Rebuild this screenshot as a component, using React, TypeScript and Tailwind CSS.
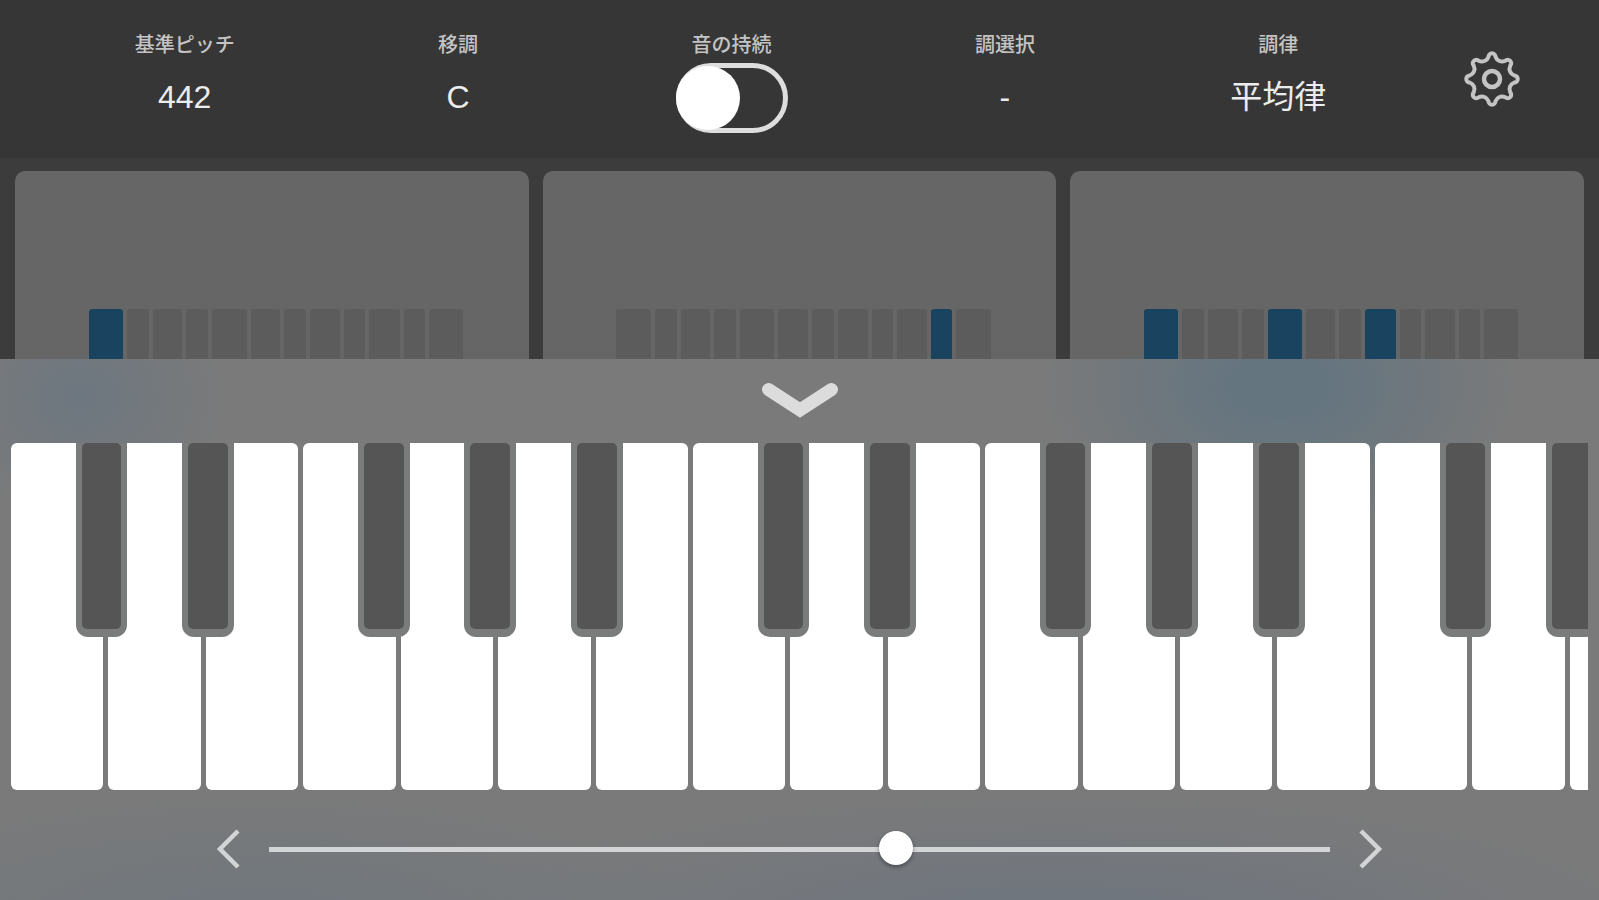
import { useState, type ReactNode } from "react";

const LABELS = {
  pitch: "基準ピッチ",
  transpose: "移調",
  sustain: "音の持続",
  keySelect: "調選択",
  temperament: "調律",
};

/* Relative widths of the twelve semitones in a chord preview. */
const SEMITONES = [34, 22, 29, 22, 34, 29, 22, 30, 21, 30, 21, 34];

const CHORDS = [
  { id: "c1", active: [0] },
  { id: "c2", active: [10] },
  { id: "c3", active: [0, 4, 7] },
];

const WHITE_NOTES = ["C", "D", "E", "F", "G", "A", "B"];
const WHITE_KEYS = Array.from({ length: 17 }, (_, i) => WHITE_NOTES[i % 7]);

/* Where each black key starts, measured on the white key to its left. */
const BLACK_LEFT: Record<string, string> = {
  C: "left-[70%]",
  D: "left-[80%]",
  F: "left-[59%]",
  G: "left-[69%]",
  A: "left-[79%]",
};

function gearPath(cx: number, cy: number, radius: number) {
  const at = (deg: number) => {
    const a = (deg * Math.PI) / 180;
    return `${(cx + radius * Math.sin(a)).toFixed(2)} ${(cy - radius * Math.cos(a)).toFixed(2)}`;
  };
  let d = `M${at(-9)}`;
  for (let t = 0; t < 8; t++) {
    d += `A3.5 3.5 0 0 1 ${at(t * 45 + 9)}A7 7 0 0 0 ${at(t * 45 + 36)}`;
  }
  return d + "Z";
}

function Field({ id, label, children }: { id: string; label: string; children: ReactNode }) {
  return (
    <div className="flex min-w-0 flex-1 flex-col items-center gap-2">
      <label htmlFor={id} className="text-[20px] leading-5 font-medium whitespace-nowrap text-[#c4c4c4]">
        {label}
      </label>
      {children}
    </div>
  );
}

function ValueButton({ id, value }: { id: string; value: string }) {
  return (
    <button id={id} type="button" className="flex h-[68px] items-center text-[32px] leading-10 whitespace-nowrap text-[#ececec]">
      {value}
    </button>
  );
}

function Header() {
  const [sustain, setSustain] = useState(false);
  return (
    <header className="flex h-[158px] shrink-0 bg-[#363636] pr-[30px] pl-[48px]">
      <div className="flex flex-1 pt-[35px]">
        <Field id="pitch" label={LABELS.pitch}>
          <ValueButton id="pitch" value="442" />
        </Field>
        <Field id="transpose" label={LABELS.transpose}>
          <ValueButton id="transpose" value="C" />
        </Field>
        <Field id="sustain" label={LABELS.sustain}>
          <span className="relative h-[70px] w-[112px]">
            <input
              id="sustain"
              type="checkbox"
              role="switch"
              checked={sustain}
              onChange={(e) => setSustain(e.target.checked)}
              className="peer block h-full w-full cursor-pointer appearance-none rounded-full border-[5px] border-[#dedede]"
            />
            <span className="pointer-events-none absolute top-[3px] left-0 size-16 rounded-full bg-white peer-checked:left-12" />
          </span>
        </Field>
        <Field id="keySelect" label={LABELS.keySelect}>
          <ValueButton id="keySelect" value="-" />
        </Field>
        <Field id="temperament" label={LABELS.temperament}>
          <ValueButton id="temperament" value="平均律" />
        </Field>
      </div>
      <div className="flex w-[154px] items-center justify-center">
        <button type="button" aria-label="設定">
          <svg viewBox="0 0 56 56" className="size-14" fill="none" stroke="#c4c4c4">
            <path d={gearPath(28, 28, 22.5)} strokeWidth="4" strokeLinejoin="round" />
            <circle cx="28" cy="28" r="8" strokeWidth="4.5" />
          </svg>
        </button>
      </div>
    </header>
  );
}

function ChordCard({ active }: { active: number[] }) {
  return (
    <div className="flex justify-center rounded-t-[10px] bg-[#666666] pt-[138px] pl-2">
      <div className="flex w-[74%] gap-1">
        {SEMITONES.map((width, i) => (
          <span
            key={i}
            style={{ flexGrow: width }}
            className={active.includes(i) ? "basis-0 rounded-t-[3px] bg-[#19435f]" : "basis-0 rounded-t-[3px] bg-[#5c5c5c]"}
          />
        ))}
      </div>
    </div>
  );
}

function Keyboard() {
  return (
    <div className="min-h-0 flex-1 overflow-hidden">
      <div className="grid h-full w-[104.7%] grid-cols-17 gap-[5px]">
        {WHITE_KEYS.map((note, i) => (
          <div key={i} className="relative">
            <button type="button" aria-label={note} className="block h-full w-full rounded-md bg-white" />
            {BLACK_LEFT[note] && (
              <button
                type="button"
                aria-label={`${note}♯`}
                className={`absolute top-0 z-10 flex h-[56%] w-[56%] rounded-b-xl bg-[#7a7b7b] px-[6px] pb-2 ${BLACK_LEFT[note]}`}
              >
                <span className="h-full w-full rounded-[5px] bg-[#555555]" />
              </button>
            )}
          </div>
        ))}
      </div>
    </div>
  );
}

function RangeBar() {
  const [position, setPosition] = useState(594);
  return (
    <div className="flex h-[110px] shrink-0 items-center gap-[29px] px-[205px] pt-2">
      <button type="button" aria-label="低音側へ">
        <svg viewBox="0 0 24 40" className="h-10 w-6" fill="none" stroke="#d2d4d5" strokeWidth="4.5">
          <path d="M22 2 L4 20 L22 38" />
        </svg>
      </button>
      <input
        type="range"
        aria-label="鍵盤の位置"
        min={0}
        max={1000}
        value={position}
        onChange={(e) => setPosition(Number(e.target.value))}
        className="h-10 min-w-0 flex-1 cursor-pointer appearance-none bg-transparent [&::-webkit-slider-runnable-track]:h-[5px] [&::-webkit-slider-runnable-track]:bg-[#d2d4d5] [&::-webkit-slider-thumb]:-mt-4 [&::-webkit-slider-thumb]:size-[34px] [&::-webkit-slider-thumb]:appearance-none [&::-webkit-slider-thumb]:rounded-full [&::-webkit-slider-thumb]:bg-white [&::-webkit-slider-thumb]:shadow-[0_2px_4px_rgba(0,0,0,0.4)]"
      />
      <button type="button" aria-label="高音側へ">
        <svg viewBox="0 0 24 40" className="h-10 w-6" fill="none" stroke="#d2d4d5" strokeWidth="4.5">
          <path d="M2 2 L20 20 L2 38" />
        </svg>
      </button>
    </div>
  );
}

export default function App() {
  return (
    <div
      lang="ja"
      className="flex h-screen flex-col overflow-hidden bg-[#3c3c3c] font-['Liberation_Sans','Noto_Sans_CJK_JP',sans-serif]"
    >
      <Header />
      <main className="grid h-[201px] shrink-0 grid-cols-3 gap-[14px] px-[15px] pt-[13px]">
        {CHORDS.map((chord) => (
          <ChordCard key={chord.id} active={chord.active} />
        ))}
      </main>
      <section className="flex min-h-0 flex-1 flex-col bg-[#7a7a7a] bg-[radial-gradient(ellipse_150px_120px_at_5%_7%,#6d7780_0%,transparent_100%),radial-gradient(ellipse_240px_150px_at_80%_5%,#657580_20%,transparent_100%),radial-gradient(ellipse_460px_130px_at_16%_104%,#70777d_10%,transparent_100%),radial-gradient(ellipse_620px_130px_at_66%_104%,#70767e_20%,transparent_100%)] px-[11px]">
        <div className="flex h-[84px] shrink-0 items-start justify-center pt-[21px]">
          <button type="button" aria-label="鍵盤を閉じる">
            <svg viewBox="0 0 80 40" className="h-10 w-20" fill="none" stroke="#dcdcdc" strokeWidth="13" strokeLinecap="round">
              <path d="M8.5 9.5 L40 30 L71.5 9.5" />
            </svg>
          </button>
        </div>
        <Keyboard />
        <RangeBar />
      </section>
    </div>
  );
}
